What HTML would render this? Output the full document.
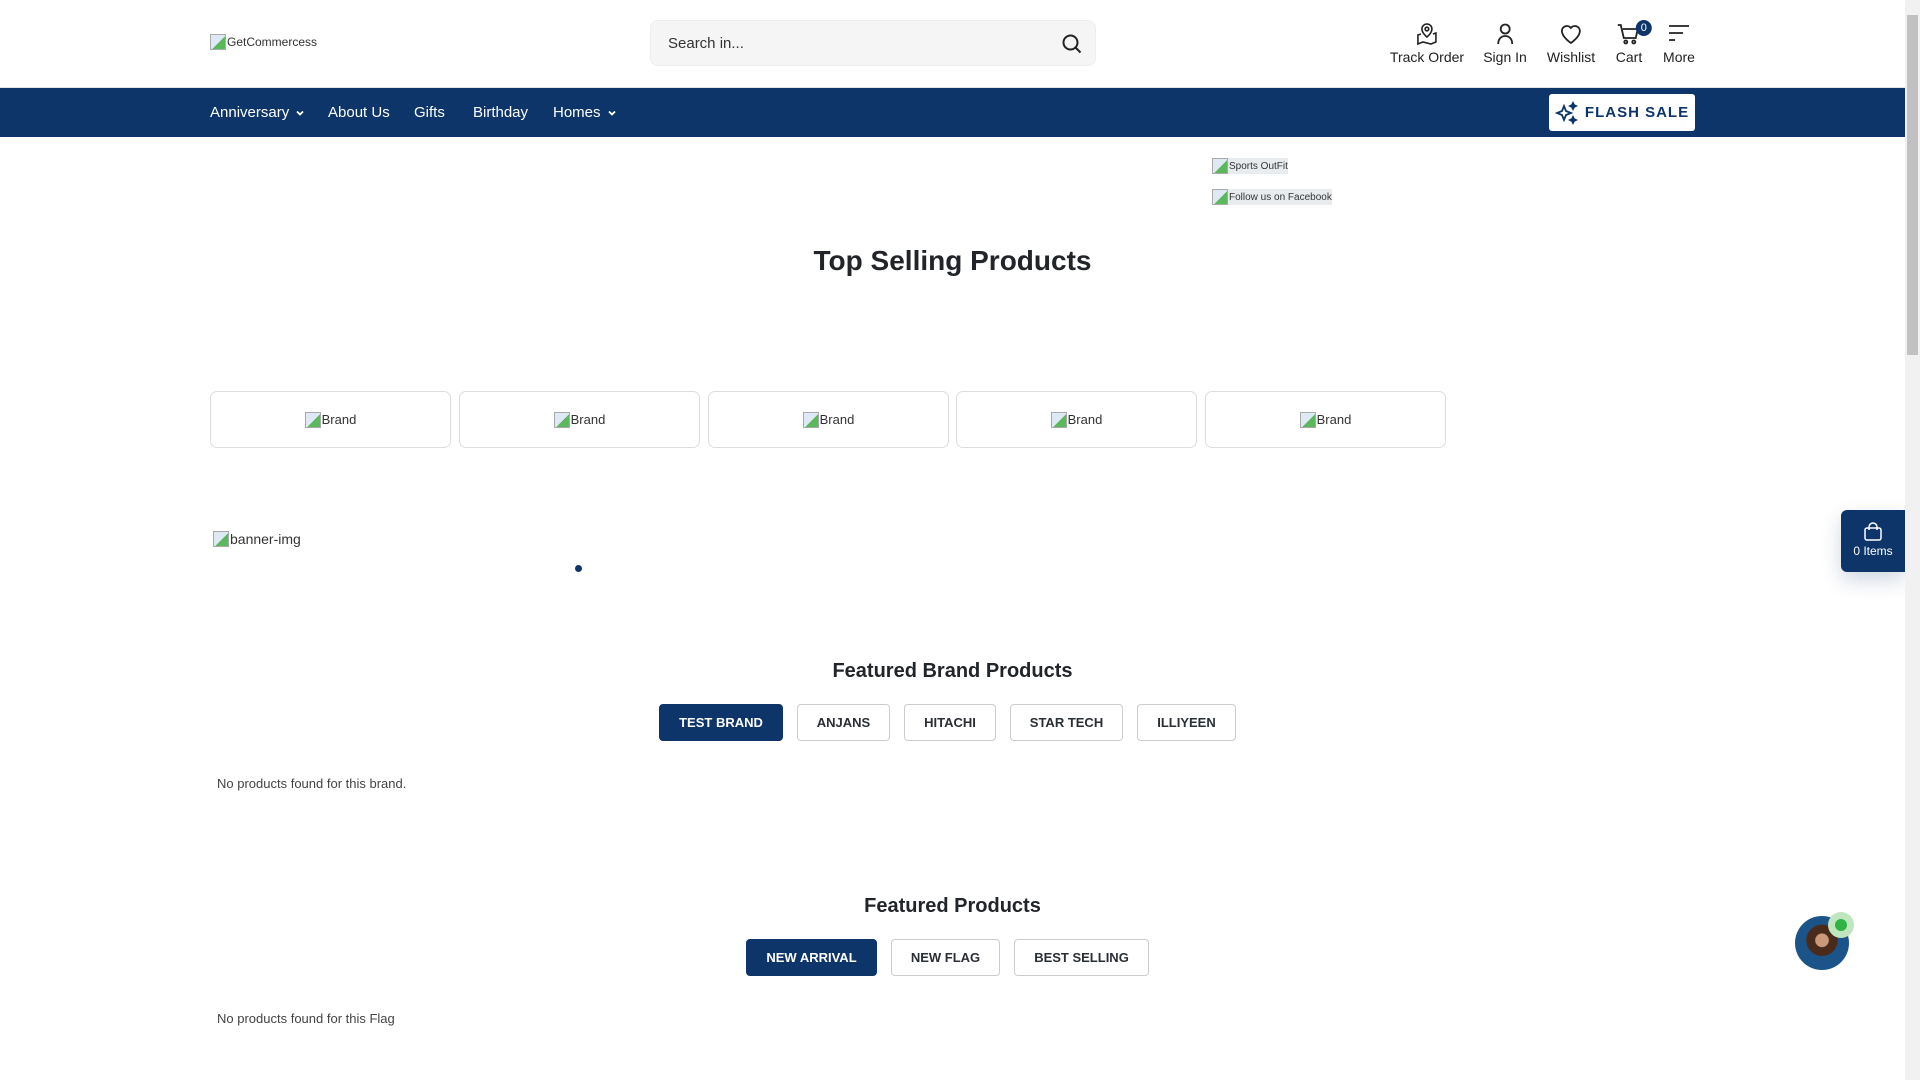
<!DOCTYPE html>
<html><head><meta charset="utf-8">
<style>
*{box-sizing:border-box;margin:0;padding:0}
body{width:1920px;height:1080px;overflow:hidden;background:#fff;font-family:"Liberation Sans",Arial,sans-serif;color:#212529;position:relative}
.abs{position:absolute}
.broken{display:inline-flex;align-items:center;font-size:12px;color:#333}
.broken i{display:inline-block;width:16px;height:16px;border:1px solid #aaa;background:linear-gradient(135deg,#dfe9f5 55%,#5cb85c 55%);margin-right:1px}
.nav{position:absolute;left:0;top:87px;width:1905px;height:50px;background:#0d3569;border-top:1px solid #e3e3e3}
.nav a{position:absolute;top:16px;color:#fff;font-size:15px;text-decoration:none;display:flex;align-items:center}
.nav a svg{margin-left:6px}
.ico{position:absolute;top:22px;text-align:center;font-size:14px;color:#222;transform:translateX(-50%)}
.ico svg{display:block;margin:0 auto 3px}
.brand{position:absolute;top:391px;width:241px;height:57px;border:1px solid #ddd;border-radius:7px;display:flex;align-items:center;justify-content:center}
h2{position:absolute;left:0;width:1905px;text-align:center;font-weight:bold}
.tab{position:absolute;height:37px;border:1px solid #ccc;border-radius:4px;font-size:13px;font-weight:bold;display:flex;align-items:center;justify-content:center;color:#2a2f36;background:#fff}
.tab.on{background:#0d3569;border-color:#0d3569;color:#fff}
.note{position:absolute;left:217px;font-size:13px;color:#444}
</style></head><body>
<div class="abs broken" style="left:210px;top:34px;font-size:12px"><i></i>GetCommercess</div>
<div class="abs" style="left:650px;top:20px;width:446px;height:46px;background:#f5f5f5;border-radius:8px;border:1px solid #eee">
<span class="abs" style="left:17px;top:14px;font-size:15px;color:#333">Search in...</span>
<svg class="abs" style="left:410px;top:12px" width="22" height="22" viewBox="0 0 22 22" fill="none" stroke="#222" stroke-width="2"><circle cx="9.5" cy="9.5" r="7"/><path d="M14.5 14.5l5 5"/></svg>
</div>
<div class="ico" style="left:1427px"><svg width="24" height="24" viewBox="0 0 24 24" fill="none" stroke="#222" stroke-width="1.6"><path d="M12 2a5 5 0 0 0-5 5c0 4 5 8 5 8s5-4 5-8a5 5 0 0 0-5-5z"/><circle cx="12" cy="7" r="1.8"/><path d="M6 12l-3 1v9l5-2 8 2 5-2v-9l-3 1"/></svg>Track Order</div>
<div class="ico" style="left:1505px"><svg width="24" height="24" viewBox="0 0 24 24" fill="none" stroke="#222" stroke-width="1.8"><circle cx="12" cy="7" r="4.5"/><path d="M5 22c0-5 3-8 7-8s7 3 7 8"/></svg>Sign In</div>
<div class="ico" style="left:1571px"><svg width="24" height="24" viewBox="0 0 24 24" fill="none" stroke="#222" stroke-width="1.8"><path d="M12 21s-9-6-9-12a5 5 0 0 1 9-3 5 5 0 0 1 9 3c0 6-9 12-9 12z"/></svg>Wishlist</div>
<div class="ico" style="left:1629px"><svg width="24" height="24" viewBox="0 0 24 24" fill="none" stroke="#222" stroke-width="1.8"><path d="M1 3h3l3 13h12l2-9H6"/><circle cx="9" cy="20" r="1.5"/><circle cx="17" cy="20" r="1.5"/></svg>Cart
<span class="abs" style="left:20px;top:-2px;width:16px;height:16px;border-radius:50%;background:#0d3569;color:#fff;font-size:11px;line-height:16px">0</span></div>
<div class="ico" style="left:1679px"><svg width="24" height="24" viewBox="0 0 24 24" fill="none" stroke="#222" stroke-width="1.8"><path d="M2 4h20M2 11h14M2 18h6"/></svg>More</div>

<div class="nav">
<a style="left:210px">Anniversary<svg width="10" height="10" viewBox="0 0 10 10" fill="none" stroke="#fff" stroke-width="1.8"><path d="M2 3.5l3 3 3-3"/></svg></a>
<a style="left:328px">About Us</a>
<a style="left:414px">Gifts</a>
<a style="left:473px">Birthday</a>
<a style="left:553px">Homes<svg width="10" height="10" viewBox="0 0 10 10" fill="none" stroke="#fff" stroke-width="1.8"><path d="M2 3.5l3 3 3-3"/></svg></a>
<div class="abs" style="left:1549px;top:6px;width:146px;height:37px;background:#fff;border-radius:3px;color:#0d3569;font-weight:bold;font-size:15px;letter-spacing:1px;display:flex;align-items:center;justify-content:center">
<svg width="24" height="24" viewBox="0 0 24 24" fill="none" stroke="#0d3569" stroke-width="1.8" style="margin-right:6px"><path d="M9 5l2 5 5 2-5 2-2 5-2-5-5-2 5-2z"/><path d="M18 2l1 2 2 1-2 1-1 2-1-2-2-1 2-1zM18 16l1 2 2 1-2 1-1 2-1-2-2-1 2-1z" fill="#0d3569"/></svg>FLASH SALE</div>
</div>

<div class="abs broken" style="left:1212px;top:158px;font-size:10px;background:#e9ecef"><i></i>Sports OutFit</div>
<div class="abs broken" style="left:1212px;top:189px;font-size:10px;background:#e9ecef"><i></i>Follow us on Facebook</div>

<h2 style="top:245px;font-size:28px">Top Selling Products</h2>

<div class="brand" style="left:210px"><span class="broken" style="font-size:13px"><i></i>Brand</span></div>
<div class="brand" style="left:459px"><span class="broken" style="font-size:13px"><i></i>Brand</span></div>
<div class="brand" style="left:708px"><span class="broken" style="font-size:13px"><i></i>Brand</span></div>
<div class="brand" style="left:956px"><span class="broken" style="font-size:13px"><i></i>Brand</span></div>
<div class="brand" style="left:1205px"><span class="broken" style="font-size:13px"><i></i>Brand</span></div>

<div class="abs broken" style="left:213px;top:531px;font-size:14px"><i></i>banner-img</div>
<div class="abs" style="left:575px;top:565px;width:7px;height:7px;border-radius:50%;background:#0d3569"></div>

<h2 style="top:660px;font-size:20px">Featured Brand Products</h2>
<div class="tab on" style="left:659px;top:704px;width:124px">TEST BRAND</div>
<div class="tab" style="left:797px;top:704px;width:93px">ANJANS</div>
<div class="tab" style="left:904px;top:704px;width:92px">HITACHI</div>
<div class="tab" style="left:1010px;top:704px;width:113px">STAR TECH</div>
<div class="tab" style="left:1137px;top:704px;width:99px">ILLIYEEN</div>
<div class="note" style="top:776px">No products found for this brand.</div>

<h2 style="top:895px;font-size:20px">Featured Products</h2>
<div class="tab on" style="left:746px;top:939px;width:131px">NEW ARRIVAL</div>
<div class="tab" style="left:891px;top:939px;width:109px">NEW FLAG</div>
<div class="tab" style="left:1014px;top:939px;width:135px">BEST SELLING</div>
<div class="note" style="top:1011px">No products found for this Flag</div>

<div class="abs" style="left:1841px;top:510px;width:64px;height:62px;background:#0d3569;border-radius:6px 0 0 6px;color:#fff;text-align:center;font-size:12px;padding-top:12px;box-shadow:0 8px 20px rgba(13,53,105,.2)">
<svg width="20" height="20" viewBox="0 0 20 20" fill="none" stroke="#fff" stroke-width="1.5" style="display:block;margin:0 auto 2px"><rect x="2" y="6" width="16" height="12" rx="2"/><path d="M6 8V5a4 4 0 0 1 8 0v3"/></svg>0 Items</div>

<div class="abs" style="left:1795px;top:916px;width:54px;height:54px;border-radius:50%;background:radial-gradient(circle at 50% 45%,#c99a7a 0 16%,#4a2a1a 18% 38%,#1a5488 40%)"></div>
<div class="abs" style="left:1828px;top:912px;width:26px;height:26px;border-radius:50%;background:#bfe6bf"></div>
<div class="abs" style="left:1835px;top:919px;width:12px;height:12px;border-radius:50%;background:#2fb344"></div>

<div class="abs" style="left:1905px;top:0;width:15px;height:1080px;background:#f1f1f1"></div>
<div class="abs" style="left:1907px;top:15px;width:11px;height:340px;background:#c1c1c1"></div>
</body></html>
